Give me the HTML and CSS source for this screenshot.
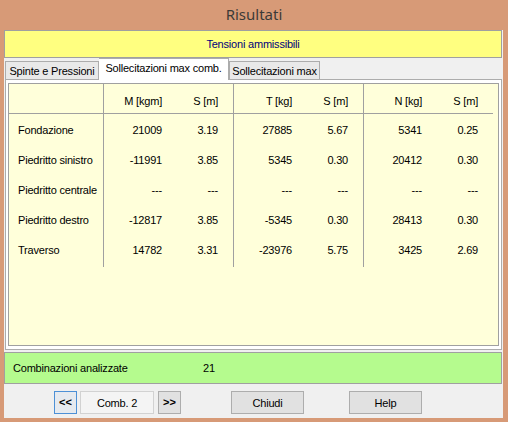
FILE: index.html
```html
<!DOCTYPE html>
<html>
<head>
<meta charset="utf-8">
<link rel="stylesheet" href="styles.css">
</head>
<body>
<div class="window">
  <div class="titlebar">Risultati</div>
  <div class="client">
    <div class="banner">Tensioni ammissibili</div>
    <div class="tabs">
      <div class="tab t1">Spinte e Pressioni</div>
      <div class="tab t2 active">Sollecitazioni max comb.</div>
      <div class="tab t3">Sollecitazioni max</div>
    </div>
    <div class="page">
      <div class="sheet">
        <div class="grid">
          <div class="c h lbl"></div><div class="c h g">M [kgm]</div><div class="c h">S [m]</div><div class="c h sp"></div><div class="c h g">T [kg]</div><div class="c h">S [m]</div><div class="c h sp"></div><div class="c h g">N [kg]</div><div class="c h">S [m]</div><div class="c h sp"></div>

          <div class="c lbl">Fondazione</div><div class="c g">21009</div><div class="c">3.19</div><div class="c sp"></div><div class="c g">27885</div><div class="c">5.67</div><div class="c sp"></div><div class="c g">5341</div><div class="c">0.25</div><div class="c sp"></div>

          <div class="c lbl">Piedritto sinistro</div><div class="c g">-11991</div><div class="c">3.85</div><div class="c sp"></div><div class="c g">5345</div><div class="c">0.30</div><div class="c sp"></div><div class="c g">20412</div><div class="c">0.30</div><div class="c sp"></div>

          <div class="c lbl">Piedritto centrale</div><div class="c g">---</div><div class="c">---</div><div class="c sp"></div><div class="c g">---</div><div class="c">---</div><div class="c sp"></div><div class="c g">---</div><div class="c">---</div><div class="c sp"></div>

          <div class="c lbl">Piedritto destro</div><div class="c g">-12817</div><div class="c">3.85</div><div class="c sp"></div><div class="c g">-5345</div><div class="c">0.30</div><div class="c sp"></div><div class="c g">28413</div><div class="c">0.30</div><div class="c sp"></div>

          <div class="c lbl last">Traverso</div><div class="c g last">14782</div><div class="c last">3.31</div><div class="c sp last"></div><div class="c g last">-23976</div><div class="c last">5.75</div><div class="c sp last"></div><div class="c g last">3425</div><div class="c last">2.69</div><div class="c sp last"></div>
        </div>
      </div>
    </div>
    <div class="status">
      <span class="status-label">Combinazioni analizzate</span>
      <span class="status-value">21</span>
    </div>
    <div class="buttons">
      <div class="btn nav focus">&lt;&lt;</div>
      <div class="combo">Comb. 2</div>
      <div class="btn nav next">&gt;&gt;</div>
      <div class="btn wide close">Chiudi</div>
      <div class="btn wide help">Help</div>
    </div>
  </div>
</div>
</body>
</html>
```

FILE: styles.css
```css
html, body {
  margin: 0;
  padding: 0;
}
body {
  background: #d79a77;
  font-family: "Liberation Sans", Arial, sans-serif;
  font-size: 11px;
  letter-spacing: -0.2px;
  color: #000;
}
.window {
  width: 508px;
  height: 422px;
  background: #d79a77;
}
.titlebar {
  height: 30px;
  box-sizing: border-box;
  padding-bottom: 2px;
  display: flex;
  align-items: center;
  justify-content: center;
  font-family: "Noto Sans", "Open Sans", sans-serif;
  font-size: 15px;
  letter-spacing: 0;
  color: #3c3a38;
}
.client {
  margin-left: 4px;
  width: 499px;
  height: 388px;
  background: #f0f0f0;
}
.banner {
  width: 498px;
  height: 28px;
  box-sizing: border-box;
  border: 1px solid #a0a0a0;
  background: #ffff80;
  color: #00007c;
  display: flex;
  align-items: center;
  justify-content: center;
}
.tabs {
  height: 21px;
  display: flex;
  align-items: flex-end;
  padding-left: 1px;
}
.tab {
  box-sizing: border-box;
  height: 18px;
  border: 1px solid #acacac;
  border-bottom: none;
  background: #e9e9e9;
  display: flex;
  align-items: center;
  justify-content: center;
  padding-top: 1px;
}
.t1 { width: 94px; }
.t2 { width: 130px; }
.t3 { width: 91px; }
.tab.active {
  height: 22px;
  margin-bottom: -1px;
  background: #ffffff;
  border-left: none;
  position: relative;
  z-index: 1;
  padding-top: 0;
  padding-bottom: 3px;
}
.tab.t3 { border-left: 1px solid #acacac; }
.page {
  margin-left: 1px;
  width: 497px;
  height: 271px;
  box-sizing: border-box;
  border: 1px solid #acacac;
  background: #ffffff;
  padding: 3px 2px 0 2px;
}
.sheet {
  height: 263px;
  box-sizing: border-box;
  border: 1px solid #a0a0a0;
  background: #ffffda;
}
.grid {
  display: grid;
  grid-template-columns: 94px 59px 56px 15px 59px 56px 15px 59px 56px 15px;
  grid-template-rows: 30px 31px 30px 30px 30px 32px;
}
.c {
  box-sizing: border-box;
  display: flex;
  align-items: center;
  justify-content: flex-end;
  white-space: nowrap;
}
.c.h {
  border-bottom: 1px solid #a0a0a0;
  padding-top: 5px;
}
.c.g {
  border-left: 1px solid #a0a0a0;
}
.c.lbl {
  justify-content: flex-start;
  padding-left: 9px;
}
.c.last {
  padding-bottom: 2px;
}
.status {
  margin-top: 2px;
  width: 498px;
  height: 32px;
  box-sizing: border-box;
  border: 1px solid #a0a0a0;
  background: #b5fb8e;
  display: flex;
  align-items: center;
  padding-left: 8px;
}
.status-label {
  width: 190px;
}
.buttons {
  margin-top: 7px;
  height: 23px;
  display: flex;
  padding-left: 50px;
}
.btn, .combo {
  box-sizing: border-box;
  height: 23px;
  display: flex;
  align-items: center;
  justify-content: center;
}
.btn {
  border: 1px solid #adadad;
  background: #e1e1e1;
}
.btn.nav {
  width: 23px;
  font-weight: bold;
  letter-spacing: 0;
  padding-bottom: 1px;
}
.btn.focus {
  border-color: #4d90d6;
  background: #e6eaef;
}
.combo {
  margin-left: 3px;
  width: 74px;
  border: 1px solid #d2d2d2;
  background: #f4f4f4;
}
.btn.next { margin-left: 4px; }
.btn.wide { width: 73px; }
.btn.close { margin-left: 50px; }
.btn.help { margin-left: 45px; }
```
